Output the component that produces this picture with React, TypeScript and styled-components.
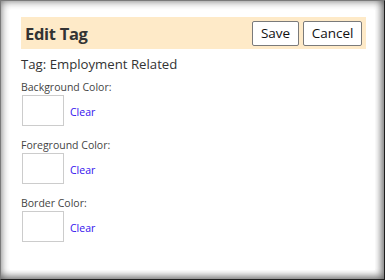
import React from "react";
import styled, { createGlobalStyle } from "styled-components";

const GlobalStyle = createGlobalStyle`
  html, body {
    margin: 0;
    padding: 0;
    background: #ffffff;
  }
  body {
    font-family: "Open Sans", "Noto Sans", sans-serif;
    color: #333333;
  }
`;

const Frame = styled.div`
  box-sizing: border-box;
  width: 385px;
  height: 280px;
  padding: 9px;
  border: 1px solid #7a7a7a;
  border-right-color: #1e1e1e;
  border-bottom-color: #1e1e1e;
  background: #ffffff;
  box-shadow:
    inset 0 0 9px rgba(0, 0, 0, 0.55),
    inset -4px -4px 6px rgba(0, 0, 0, 0.25);
  display: flex;
`;

const Dialog = styled.div`
  flex: 1;
  background: #ffffff;
  padding: 7px 9px 0 11px;
  display: flex;
  flex-direction: column;
`;

const Header = styled.div`
  height: 32px;
  background: #feeac8;
  display: flex;
  align-items: center;
  justify-content: space-between;
  padding: 0 4px;
`;

const Title = styled.h2`
  margin: 0;
  font-size: 16.5px;
  font-weight: 700;
  color: #333333;
  letter-spacing: -0.3px;
`;

const Actions = styled.div`
  display: flex;
  gap: 4px;
`;

const Button = styled.button<{ w: number }>`
  box-sizing: border-box;
  width: ${(p) => p.w}px;
  height: 25px;
  padding: 0;
  background: #ffffff;
  border: 1px solid #7a7a7a;
  border-radius: 2px;
  font-family: "Open Sans", "Noto Sans", sans-serif;
  font-size: 13.5px;
  color: #111111;
`;

const TagName = styled.div`
  margin-top: 5px;
  font-size: 13.2px;
  line-height: 20px;
  color: #333333;
`;

const Field = styled.div`
  margin-top: 5px;
  margin-bottom: 6px;
`;

const Label = styled.div`
  font-size: 10.5px;
  line-height: 16px;
  color: #444444;
`;

const Row = styled.div`
  display: flex;
  align-items: center;
  gap: 6px;
  padding-left: 1px;
`;

const Swatch = styled.div`
  box-sizing: border-box;
  width: 42px;
  height: 31px;
  border: 1px solid #cccccc;
  background: #ffffff;
`;

const ClearLink = styled.a`
  font-size: 10.5px;
  color: #3311ee;
  text-decoration: none;
  margin-top: 2px;
`;

const fields = ["Background Color:", "Foreground Color:", "Border Color:"];

export default function App() {
  return (
    <>
      <GlobalStyle />
      <Frame>
        <Dialog>
          <Header>
            <Title>Edit Tag</Title>
            <Actions>
              <Button w={47}>Save</Button>
              <Button w={59}>Cancel</Button>
            </Actions>
          </Header>
          <TagName>Tag: Employment Related</TagName>
          {fields.map((f) => (
            <Field key={f}>
              <Label>{f}</Label>
              <Row>
                <Swatch />
                <ClearLink href="#">Clear</ClearLink>
              </Row>
            </Field>
          ))}
        </Dialog>
      </Frame>
    </>
  );
}
